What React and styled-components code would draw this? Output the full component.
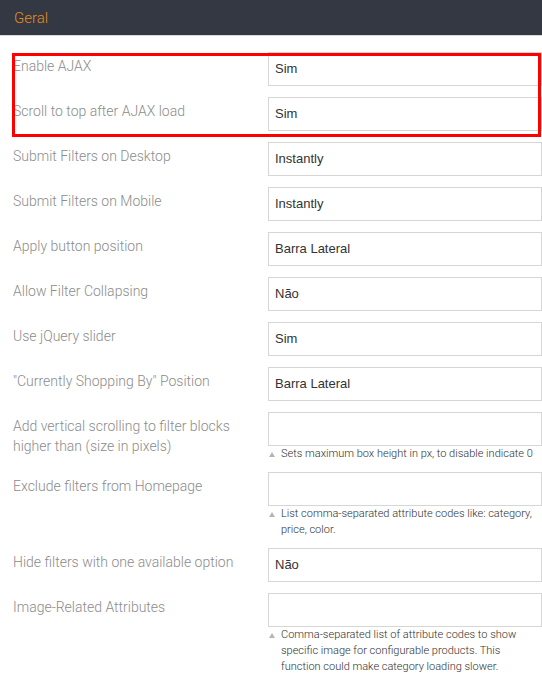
import React from "react";
import styled, { createGlobalStyle } from "styled-components";

const Global = createGlobalStyle`
  html, body { margin: 0; padding: 0; background: #fff; }
  body { font-family: Roboto, "Liberation Sans", Arial, sans-serif; }
  * { box-sizing: border-box; }
`;

const Page = styled.div`
  position: relative;
  width: 542px;
  min-height: 684px;
  background: #fff;
`;

const Header = styled.div`
  height: 36px;
  background: #333842;
  border-bottom: 1px solid #d9d9d9;
  padding-left: 14px;
  display: flex;
  align-items: center;
  font-family: Roboto, sans-serif;
  font-size: 15px;
  font-weight: 300;
  color: #e58b1c;
`;

const Form = styled.div`
  display: flex;
  flex-direction: column;
  gap: 11px;
  padding-top: 16px;
`;

const Row = styled.div`
  display: grid;
  grid-template-columns: 255px 1fr;
  padding-left: 13px;
`;

const Label = styled.div`
  padding-top: 4px;
  padding-right: 10px;
  font-family: Roboto, sans-serif;
  font-size: 14px;
  font-weight: 300;
  line-height: 20px;
  color: #8c8c8c;
`;

const Control = styled.div`
  display: flex;
  flex-direction: column;
`;

const Field = styled.div`
  height: 34px;
  border: 1px solid #d6d6d6;
  padding: 0 6px 2px;
  display: flex;
  align-items: center;
  font-family: "Liberation Sans", Arial, sans-serif;
  font-size: 13px;
  color: #333;
  background: #fff;
`;

const Note = styled.div`
  display: flex;
  align-items: flex-start;
  margin-bottom: -1px;
  font-family: Roboto, sans-serif;
  font-size: 11px;
  font-weight: 300;
  line-height: 16px;
  color: #303030;
`;

const NoteIcon = styled.span`
  flex: 0 0 13px;
  display: flex;
  justify-content: flex-start;
  padding-left: 1px;
  padding-top: 6px;
`;

const Highlight = styled.div`
  position: absolute;
  left: 12px;
  top: 53px;
  width: 529px;
  height: 84px;
  border: 3px solid #ff0000;
  pointer-events: none;
`;

const rows = [
  { label: "Enable AJAX", value: "Sim" },
  { label: "Scroll to top after AJAX load", value: "Sim" },
  { label: "Submit Filters on Desktop", value: "Instantly" },
  { label: "Submit Filters on Mobile", value: "Instantly" },
  { label: "Apply button position", value: "Barra Lateral" },
  { label: "Allow Filter Collapsing", value: "Não" },
  { label: "Use jQuery slider", value: "Sim" },
  { label: "\"Currently Shopping By\" Position", value: "Barra Lateral" },
  {
    label: "Add vertical scrolling to filter blocks higher than (size in pixels)",
    value: "",
    note: "Sets maximum box height in px, to disable indicate 0",
  },
  {
    label: "Exclude filters from Homepage",
    value: "",
    note: "List comma-separated attribute codes like: category, price, color.",
  },
  { label: "Hide filters with one available option", value: "Não" },
  {
    label: "Image-Related Attributes",
    value: "",
    note: "Comma-separated list of attribute codes to show specific image for configurable products. This function could make category loading slower.",
  },
];

const Triangle = () => (
  <svg width="6" height="5" viewBox="0 0 6 5">
    <polygon points="3,0 6,5 0,5" fill="#b5b5b5" />
  </svg>
);

export default function App() {
  return (
    <Page>
      <Global />
      <Header>Geral</Header>
      <Form>
        {rows.map((r, i) => (
          <Row key={i}>
            <Label>{r.label}</Label>
            <Control>
              <Field>{r.value}</Field>
              {r.note && (
                <Note>
                  <NoteIcon>
                    <Triangle />
                  </NoteIcon>
                  <span>{r.note}</span>
                </Note>
              )}
            </Control>
          </Row>
        ))}
      </Form>
      <Highlight />
    </Page>
  );
}
